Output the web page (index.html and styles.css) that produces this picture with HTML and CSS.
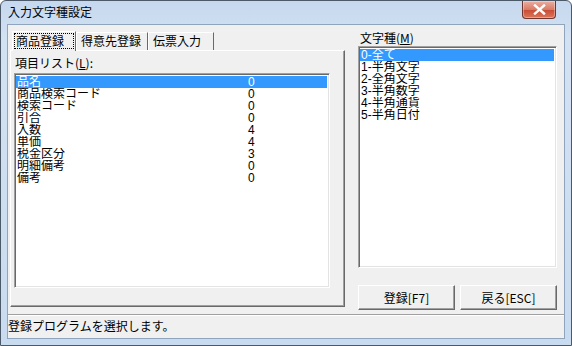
FILE: index.html
```html
<!DOCTYPE html>
<html lang="ja">
<head>
<meta charset="utf-8">
<title>入力文字種設定</title>
<link rel="stylesheet" href="styles.css">
</head>
<body>
<div class="window">
  <div class="titlebar">
    <span class="title">入力文字種設定</span>
    <div class="close"><svg width="13" height="11" viewBox="0 0 13 11"><path d="M2 1.5 L11 9.5 M11 1.5 L2 9.5" stroke="#fff" stroke-width="2.4" stroke-linecap="square"/></svg></div>
  </div>
  <div class="client">
    <div class="main">
      <div class="leftcol">
        <div class="tabs">
          <div class="tab active"><span class="focus">商品登録</span></div>
          <div class="tab">得意先登録</div>
          <div class="tab">伝票入力</div>
        </div>
        <div class="panel">
          <div class="label">項目リスト(<u>L</u>):</div>
          <div class="listbox items">
            <div class="row sel"><span>品名</span><span>0</span></div>
            <div class="row"><span>商品検索コード</span><span>0</span></div>
            <div class="row"><span>検索コード</span><span>0</span></div>
            <div class="row"><span>引合</span><span>0</span></div>
            <div class="row"><span>入数</span><span>4</span></div>
            <div class="row"><span>単価</span><span>4</span></div>
            <div class="row"><span>税金区分</span><span>3</span></div>
            <div class="row"><span>明細備考</span><span>0</span></div>
            <div class="row"><span>備考</span><span>0</span></div>
          </div>
        </div>
      </div>
      <div class="rightcol">
        <div class="label">文字種(<u>M</u>)</div>
        <div class="listbox types">
          <div class="row sel">0-全て</div>
          <div class="row">1-半角文字</div>
          <div class="row">2-全角文字</div>
          <div class="row">3-半角数字</div>
          <div class="row">4-半角通貨</div>
          <div class="row">5-半角日付</div>
        </div>
        <div class="buttons">
          <button class="btn">登録[F7]</button>
          <button class="btn">戻る[ESC]</button>
        </div>
      </div>
    </div>
    <div class="status">登録プログラムを選択します。</div>
  </div>
</div>
</body>
</html>
```

FILE: styles.css
```css
* { box-sizing: border-box; }
html, body { margin: 0; padding: 0; }
body {
  width: 572px;
  height: 346px;
  font-family: "Noto Sans CJK JP", "DejaVu Sans", sans-serif;
  font-size: 12px;
  color: #000;
  background: #fff;
  overflow: hidden;
}
.window {
  width: 572px;
  height: 346px;
  border: 1px solid #4b5969;
  border-radius: 6px 6px 0 0;
  background: linear-gradient(#c6d8ee, #d3e2f3 40px, #c9dbef);
  padding: 0 6px 6px 6px;
  display: flex;
  flex-direction: column;
}
.titlebar {
  height: 23px;
  display: flex;
  justify-content: space-between;
  align-items: flex-start;
}
.title {
  margin-top: 3px;
  margin-left: 1px;
  font-size: 12px;
  line-height: 16px;
  color: #000;
}
.close {
  width: 34px;
  height: 18px;
  margin-right: 9px;
  border: 1px solid #6f3530;
  border-top: none;
  border-radius: 0 0 4px 4px;
  background: linear-gradient(#eab0a3, #d97a66 50%, #c84a33 51%, #db7659);
  display: flex;
  align-items: center;
  justify-content: center;
  box-shadow: inset 0 0 0 1px rgba(255,255,255,0.35);
}
.client {
  flex: 1;
  background: #f0f0f0;
  border: 1px solid #8fa4bd;
  display: flex;
  flex-direction: column;
}
.main {
  height: 289px;
  display: flex;
  padding: 6px 7px 0 2px;
  gap: 13px;
}
.leftcol {
  width: 335px;
  display: flex;
  flex-direction: column;
}
.tabs {
  height: 19px;
  display: flex;
  align-items: flex-end;
  padding-left: 2px;
  position: relative;
  z-index: 1;
}
.tab {
  height: 18px;
  padding: 0 4px;
  line-height: 16px;
  border-top: 1px solid #fff;
  border-left: 1px solid #fff;
  border-right: 1px solid #696969;
  background: #f0f0f0;
  white-space: nowrap;
}
.tab.active {
  height: 20px;
  margin-bottom: -1px;
  padding: 1px 1px 0 1px;
  width: 64px;
}
.tab.active + .tab { width: 72px; }
.tab + .tab + .tab { width: 66px; }
.focus {
  display: block;
  outline: 1px dotted #000;
  outline-offset: -1px;
  padding: 0 2px;
  line-height: 16px;
}
.panel {
  height: 257px;
  border-top: 1px solid #fff;
  border-left: 1px solid #fff;
  border-right: 1px solid #696969;
  border-bottom: 1px solid #696969;
  box-shadow: inset -1px -1px 0 #a0a0a0;
  padding: 5px 0 0 3px;
}
.label {
  line-height: 14px;
  height: 16px;
  padding-left: 1px;
}
.listbox {
  background: #fff;
  border-top: 1px solid #a0a0a0;
  border-left: 1px solid #a0a0a0;
  border-right: 1px solid #fff;
  border-bottom: 1px solid #fff;
  box-shadow: inset 1px 1px 0 #696969, inset -1px -1px 0 #e3e3e3;
  padding: 2px 2px 0 1px;
}
.items {
  width: 316px;
  height: 215px;
  margin-top: 1px;
}
.row {
  height: 12px;
  line-height: 12px;
  font-family: "Liberation Sans", "Noto Sans CJK JP", sans-serif;
  font-size: 12px;
  padding-left: 1px;
  white-space: nowrap;
  overflow: hidden;
}
.items .row {
  display: grid;
  grid-template-columns: 231px 20px;
}
.row.sel {
  background: #3399ff;
  color: #fff;
}
.rightcol {
  width: 199px;
  display: flex;
  flex-direction: column;
}
.rightcol .label { padding-left: 2px; }
.types {
  height: 222px;
  margin-top: -1px;
}
.buttons {
  display: flex;
  gap: 5px;
  margin-top: 17px;
}
.btn {
  width: 97px;
  height: 25px;
  font-family: "Noto Sans CJK JP", "DejaVu Sans", sans-serif;
  font-size: 12px;
  color: #000;
  background: #f0f0f0;
  border-top: 1px solid #fff;
  border-left: 1px solid #fff;
  border-right: 1px solid #696969;
  border-bottom: 1px solid #696969;
  box-shadow: inset -1px -1px 0 #a0a0a0;
  padding: 0;
}
.status {
  flex: 1;
  border-top: 1px solid #a0a0a0;
  box-shadow: inset 0 1px 0 #fff;
  padding: 4px 0 0 0;
  line-height: 14px;
}
```
